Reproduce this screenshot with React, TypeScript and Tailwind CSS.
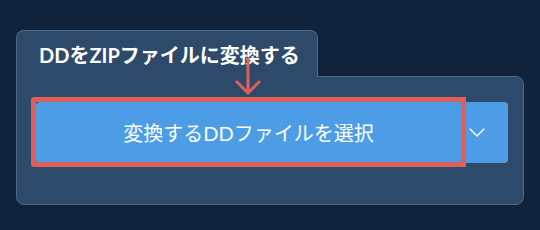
import React from "react";

const App = () => {
  return (
    <div className="relative w-[540px] h-[230px] bg-[#11233a] pt-[30px] pl-4 font-['Lato','Noto_Sans_CJK_JP',sans-serif]">
      <div className="relative z-10 -mb-px w-[302px] h-[47px] rounded-t-lg border border-b-0 border-[#4a6888] bg-[#2d4a6a] pl-[22px] pt-[12px]">
        <h2 className="text-[20px] leading-[24px] font-bold text-white">DDをZIPファイルに変換する</h2>
      </div>
      <div className="w-[508px] h-[129px] rounded-b-lg rounded-tr-lg border border-[#4a6888] bg-[#2d4a6a] pl-[19px] pt-[25px]">
        <div className="relative flex w-[472px] h-[61px]">
          <button className="w-[425px] h-full rounded-l bg-[#4d9de6] text-white text-[20px] font-normal">
            変換するDDファイルを選択
          </button>
          <button className="flex flex-1 items-center pl-2 rounded-r bg-[#4d9de6]">
            <svg width="16" height="9" viewBox="0 0 16 9" fill="none">
              <path d="M0.8 0.8 L8 8 L15.2 0.8" stroke="white" strokeWidth="1.4" />
            </svg>
          </button>
          <div className="pointer-events-none absolute left-[-5px] top-[-5px] w-[435px] h-[70px] rounded-l-[3px] border-[5px] border-[#df5f5a]" />
        </div>
      </div>
      <svg className="absolute z-20 left-[234px] top-[57px]" width="28" height="40" viewBox="0 0 28 40" fill="none">
        <path d="M14 1 L14 36 M2 24 L14 36 L26 24" stroke="#df5f5a" strokeWidth="3" />
      </svg>
    </div>
  );
};

export default App;
